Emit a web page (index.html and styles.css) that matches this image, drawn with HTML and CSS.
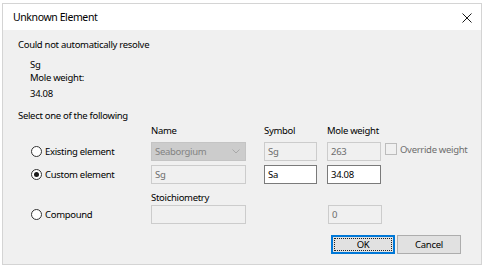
FILE: index.html
```html
<!DOCTYPE html>
<html>
<head>
<meta charset="utf-8">
<title>Unknown Element</title>
<link rel="stylesheet" href="styles.css">
</head>
<body>
<div class="window">
  <div class="titlebar">
    <span class="title">Unknown Element</span>
    <span class="close"><svg width="10" height="10" viewBox="0 0 10 10"><path d="M0.5 0.5 L9.5 9.5 M9.5 0.5 L0.5 9.5" stroke="#1a1a1a" stroke-width="1" fill="none"/></svg></span>
  </div>
  <div class="content">
    <p class="msg">Could not automatically resolve</p>
    <div class="info">
      <div class="line">Sg</div>
      <div class="line">Mole weight:</div>
      <div class="line mw">34.08</div>
    </div>
    <p class="select">Select one of the following</p>
    <div class="grid">
      <div></div>
      <div class="hdr">Name</div>
      <div class="hdr">Symbol</div>
      <div class="hdr">Mole weight</div>
      <div></div>

      <div class="radio"><span class="dot"></span>Existing element</div>
      <div class="combo">Seaborgium<svg class="chev" width="8" height="5" viewBox="0 0 8 5"><path d="M0.5 0.5 L4 4 L7.5 0.5" stroke="#a8a8a8" fill="none"/></svg></div>
      <div class="box sym dis">Sg</div>
      <div class="box mwb dis">263</div>
      <div class="check"><span class="cb"></span>Override weight</div>

      <div class="radio on"><span class="dot"></span>Custom element</div>
      <div class="box name dis">Sg</div>
      <div class="box sym">Sa</div>
      <div class="box mwb">34.08</div>
      <div></div>

      <div></div>
      <div class="hdr bottom">Stoichiometry</div>
      <div></div>
      <div></div>
      <div></div>

      <div class="radio"><span class="dot"></span>Compound</div>
      <div class="box name dis"></div>
      <div></div>
      <div class="box mwb dis zero">0</div>
      <div></div>
    </div>
    <div class="buttons">
      <div class="btn default"><span>OK</span></div>
      <div class="btn">Cancel</div>
    </div>
  </div>
</div>
</body>
</html>
```

FILE: styles.css
```css
html, body {
  margin: 0;
  padding: 0;
  background: #ffffff;
}
body {
  font-family: "Segoe UI", "Noto Sans", sans-serif;
  font-size: 9.5px;
  letter-spacing: -0.3px;
  color: #000;
}
.window {
  margin: 3px 0 0 2px;
  width: 478px;
  height: 260px;
  border: 1px solid #d4d4d4;
  display: flex;
  flex-direction: column;
  background: #f0f0f0;
}
.titlebar {
  height: 26px;
  background: #fff;
  display: flex;
  align-items: center;
  justify-content: space-between;
  padding: 0 9px 0 10px;
  flex: none;
}
.title {
  font-size: 10.5px;
  letter-spacing: -0.4px;
}
.close {
  display: flex;
  width: 10px;
  height: 10px;
  margin-top: 1px;
}
.content {
  flex: 1;
  padding: 8px 0 0 15px;
  line-height: 13px;
}
.msg {
  margin: 0;
}
.info {
  padding-left: 12px;
  margin-top: 7px;
}
.info .mw {
  margin-top: 3px;
}
.select {
  margin: 9px 0 0 0;
}
.grid {
  display: grid;
  margin-top: 2px;
  margin-left: 13px;
  grid-template-columns: 120px 113px 63px 58px auto;
  grid-template-rows: 18px 23px 19px 21px 19px;
  align-items: start;
}
.hdr {
  line-height: 13px;
}
.hdr.bottom {
  align-self: end;
  padding-bottom: 1px;
}
.radio {
  height: 19px;
  display: flex;
  align-items: center;
  gap: 3px;
}
.dot {
  width: 9px;
  height: 9px;
  border: 1px solid #333;
  border-radius: 50%;
  background: #fff;
  position: relative;
  flex: none;
}
.radio.on .dot::after {
  content: "";
  position: absolute;
  left: 2px;
  top: 2px;
  width: 5px;
  height: 5px;
  border-radius: 50%;
  background: #1a1a1a;
}
.combo {
  height: 17px;
  border: 1px solid #c4c4c4;
  background: #cccccc;
  color: #838383;
  display: flex;
  align-items: center;
  justify-content: space-between;
  padding: 0 5px 0 3px;
  width: 85px;
}
.box {
  height: 17px;
  border: 1px solid #7a7a7a;
  background: #fff;
  display: flex;
  align-items: center;
  padding-left: 3px;
}
.box.dis {
  border-color: #cccccc;
  background: #f0f0f0;
  color: #6d6d6d;
}
.box.name { width: 90px; }
.box.sym { width: 48px; }
.box.mwb { width: 49px; }
.box.zero { margin-left: 1px; }
.check {
  height: 12px;
  display: flex;
  align-items: center;
  gap: 3px;
  color: #6d6d6d;
  margin-top: 1px;
}
.cb {
  width: 10px;
  height: 10px;
  border: 1px solid #bcbcbc;
  background: #f0f0f0;
  flex: none;
}
.buttons {
  display: flex;
  gap: 2px;
  margin: 11px 0 0 313px;
}
.btn {
  width: 62px;
  height: 17px;
  border: 1px solid #adadad;
  background: #e1e1e1;
  display: flex;
  align-items: center;
  justify-content: center;
}
.btn.default {
  border-color: #0078d7;
  box-shadow: inset 0 0 0 1px #0078d7;
  position: relative;
}
.btn.default::after {
  content: "";
  position: absolute;
  inset: 2px;
  border: 1px dotted #222;
}
```
